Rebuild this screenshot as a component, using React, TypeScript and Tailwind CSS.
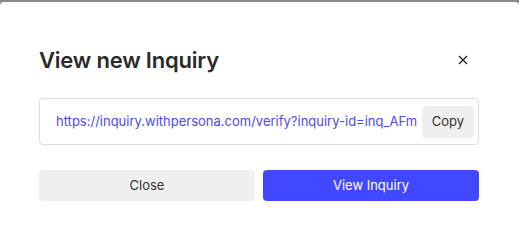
import React from 'react';

const App: React.FC = () => {
  return (
    <div className="w-[519px] h-[238px] bg-[#8a8a8a] pt-[2px] font-['Inter',sans-serif]">
      <div className="h-full bg-white rounded-t-[4px] pl-[39px] pr-[40px] pt-[43px]">
        <div className="flex items-center justify-between h-[30px]">
          <h2 className="text-[22px] font-semibold text-[#2b2b2b] tracking-[-0.2px]">View new Inquiry</h2>
          <button className="w-[20px] h-[20px] flex items-center justify-center mr-[6px] text-[#222]">
            <svg width="10" height="10" viewBox="0 0 10 10" fill="none" stroke="currentColor" strokeWidth="1.3">
              <path d="M1 1L9 9M9 1L1 9" />
            </svg>
          </button>
        </div>
        <div className="mt-[23px] h-[47px] border border-[#dcdcdc] rounded-[4px] flex items-center pl-[16px] pr-[4px]">
          <span className="flex-1 text-[13px] text-[#4b4bf0] whitespace-nowrap overflow-hidden">
            https://inquiry.withpersona.com/verify?inquiry-id=inq_AFm
          </span>
          <button className="h-[32px] px-[10px] rounded-[4px] bg-[#f0f0f0] text-[13px] text-[#333]">Copy</button>
        </div>
        <div className="mt-[25px] grid grid-cols-2 gap-[8px]">
          <button className="h-[31px] rounded-[4px] bg-[#f0f0f0] text-[13px] text-[#333]">Close</button>
          <button className="h-[31px] rounded-[4px] bg-[#4248ff] text-[13px] text-white">View Inquiry</button>
        </div>
      </div>
    </div>
  );
};

export default App;
